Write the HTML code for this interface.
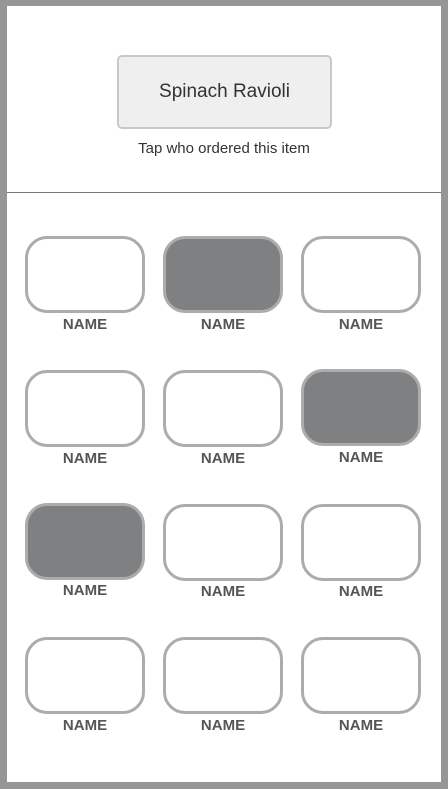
<!DOCTYPE html>
<html><head><style>
body{margin:0;width:448px;height:790px;position:relative;background:#fff;font-family:"Liberation Sans",sans-serif;overflow:hidden}
.frame{position:absolute;left:0;top:0;width:434px;height:776px;border:7px solid #969696;border-top-width:6px}
.btn{position:absolute;left:117px;top:55px;width:211px;height:70px;background:#efefef;border:2px solid #c8c8c8;border-radius:5px;text-align:center;line-height:70px;font-size:19px;color:#333}
.sub{position:absolute;left:0;width:448px;top:140px;text-align:center;font-size:15px;color:#333}
.hr{position:absolute;left:7px;right:7px;top:192px;height:1px;background:#777}
.t{position:absolute;width:114px;height:71px;border:3px solid #acacac;border-radius:22px;background:#fff}
.f{background:#7f8081}
.l{position:absolute;width:120px;text-align:center;font-weight:bold;font-size:15px;color:#555}
</style></head><body>
<div class="frame"></div>
<div class="btn">Spinach Ravioli</div>
<div class="sub">Tap who ordered this item</div>
<div class="hr"></div>
<div class="t" style="left:25px;top:236px"></div><div class="l" style="left:25px;top:316px">NAME</div>
<div class="t f" style="left:163px;top:236px"></div><div class="l" style="left:163px;top:316px">NAME</div>
<div class="t" style="left:301px;top:236px"></div><div class="l" style="left:301px;top:316px">NAME</div>
<div class="t" style="left:25px;top:370px"></div><div class="l" style="left:25px;top:450px">NAME</div>
<div class="t" style="left:163px;top:370px"></div><div class="l" style="left:163px;top:450px">NAME</div>
<div class="t f" style="left:301px;top:369px"></div><div class="l" style="left:301px;top:449px">NAME</div>
<div class="t f" style="left:25px;top:503px"></div><div class="l" style="left:25px;top:582px">NAME</div>
<div class="t" style="left:163px;top:504px"></div><div class="l" style="left:163px;top:583px">NAME</div>
<div class="t" style="left:301px;top:504px"></div><div class="l" style="left:301px;top:583px">NAME</div>
<div class="t" style="left:25px;top:637px"></div><div class="l" style="left:25px;top:717px">NAME</div>
<div class="t" style="left:163px;top:637px"></div><div class="l" style="left:163px;top:717px">NAME</div>
<div class="t" style="left:301px;top:637px"></div><div class="l" style="left:301px;top:717px">NAME</div>
</body></html>
